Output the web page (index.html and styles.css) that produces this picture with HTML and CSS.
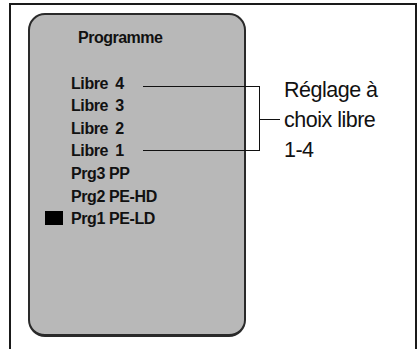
FILE: index.html
```html
<!DOCTYPE html>
<html lang="fr">
<head>
<meta charset="UTF-8">
<meta name="viewport" content="width=device-width, initial-scale=1.0">
<title>Programme</title>
<link rel="stylesheet" href="styles.css">
</head>
<body>
  <div class="frame">
    <div class="panel">
      <div class="panel-title">Programme</div>
      <ul class="prog-list">
        <li class="libre">Libre 4</li>
        <li class="libre">Libre 3</li>
        <li class="libre">Libre 2</li>
        <li class="libre">Libre 1</li>
        <li>Prg3 PP</li>
        <li>Prg2 PE-HD</li>
        <li class="active">Prg1 PE-LD</li>
      </ul>
    </div>
    <div class="callout">Réglage à<br>choix libre<br>1-4</div>
    <div class="bracket"></div>
  </div>
</body>
</html>
```

FILE: styles.css
```css
body {
  margin: 0;
  padding: 0;
  background: #fff;
  font-family: "Liberation Sans", Arial, sans-serif;
  color: #111;
}

.frame {
  position: relative;
  box-sizing: border-box;
  width: 408px;
  height: 346px;
  margin: 3px 0 0 9px;
  padding: 8px 0 0 17px;
  border: 2px solid #1a1a1a;
  border-bottom: none;
  display: flex;
  align-items: flex-start;
}

.panel {
  box-sizing: border-box;
  width: 218px;
  height: 324px;
  background-color: #b8b8b8;
  border: 2px solid #2a2a2a;
  border-bottom-width: 3px;
  border-radius: 17px;
  padding: 14px 0 0 41px;
}

.panel-title {
  font-size: 16px;
  font-weight: bold;
  line-height: 18px;
  letter-spacing: -0.5px;
  padding-left: 7px;
}

.prog-list {
  list-style: none;
  margin: 25.6px 0 0;
  padding: 0;
}

.prog-list li {
  position: relative;
  font-size: 16px;
  font-weight: bold;
  line-height: 22.6px;
  letter-spacing: -0.4px;
}

.prog-list li.libre {
  word-spacing: 3px;
}

.prog-list li.active::before {
  content: "";
  position: absolute;
  left: -26px;
  top: 3px;
  width: 18px;
  height: 14px;
  background: #000;
}

.callout {
  margin: 61.5px 0 0 38px;
  font-size: 21.5px;
  line-height: 30px;
  letter-spacing: -0.5px;
}

.bracket {
  position: absolute;
  left: 132px;
  top: 81px;
  width: 116px;
  height: 63px;
  border: 1px solid #111;
  border-left: none;
}

.bracket::after {
  content: "";
  position: absolute;
  left: 100%;
  top: 32px;
  width: 21px;
  border-top: 1px solid #111;
}
```
